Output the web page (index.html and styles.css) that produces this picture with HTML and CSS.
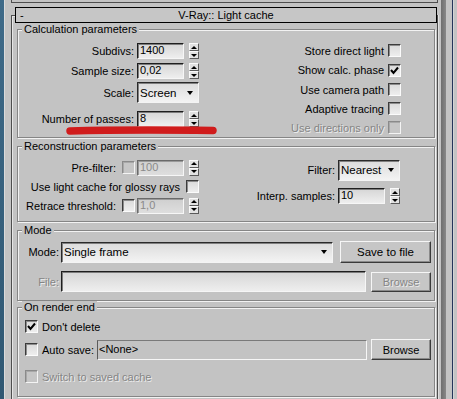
FILE: index.html
```html
<!DOCTYPE html>
<html>
<head>
<meta charset="utf-8">
<title>V-Ray:: Light cache</title>
<link rel="stylesheet" href="styles.css">
</head>
<body>
<div class="desk">
  <div class="edge-left"></div>
  <div class="column">
    <div class="prev"></div>
    <div class="rollout">
      <div class="rollout-title"><span class="toggle">-</span><span class="title-text">V-Ray:: Light cache</span><span></span></div>

      <div class="group calc">
        <div class="legend"><span>Calculation parameters</span></div>
        <div class="cols">
          <div class="lcol calc-l">
            <div class="row h16"><span class="lbl">Subdivs:</span><span class="field">1400</span><span class="spin"><span class="up"></span><span class="dn"></span></span></div>
            <div class="row h16 mt4"><span class="lbl">Sample size:</span><span class="field">0,02</span><span class="spin"><span class="up"></span><span class="dn"></span></span></div>
            <div class="row h21 mt3"><span class="lbl">Scale:</span><span class="combo w62"><span>Screen</span><i class="arrow"></i></span></div>
            <div class="row h16 mt8"><span class="lbl">Number of passes:</span><span class="field">8</span><span class="spin"><span class="up"></span><span class="dn"></span></span></div>
          </div>
          <div class="rcol calc-r">
            <div class="crow h19"><span>Store direct light</span><span class="cb"></span></div>
            <div class="crow h20"><span>Show calc. phase</span><span class="cb"><svg width="11" height="11" viewBox="0 0 11 11"><polyline points="2,5 4.5,8 9,2.5" fill="none" stroke="#000" stroke-width="2"/></svg></span></div>
            <div class="crow h19"><span>Use camera path</span><span class="cb"></span></div>
            <div class="crow h19"><span>Adaptive tracing</span><span class="cb"></span></div>
            <div class="crow h19 off"><span>Use directions only</span><span class="cb dis"></span></div>
          </div>
        </div>
        <svg class="marker" width="153" height="11" viewBox="0 0 153 11"><path d="M5 6 Q 60 4.5 148 5.5" fill="none" stroke="#d01c1c" stroke-width="7.5" stroke-linecap="round"/></svg>
      </div>

      <div class="group recon">
        <div class="legend"><span>Reconstruction parameters</span></div>
        <div class="cols">
          <div class="lcol recon-l">
            <div class="row h19"><span class="lbl2">Pre-filter:</span><span class="cb dis mr2"></span><span class="field dis">100</span><span class="spin"><span class="up"></span><span class="dn"></span></span></div>
            <div class="row h19"><span class="lbl2">Use light cache for glossy rays</span><span class="cb"></span></div>
            <div class="row h19"><span class="lbl2">Retrace threshold:</span><span class="cb mr2"></span><span class="field dis">1,0</span><span class="spin"><span class="up"></span><span class="dn"></span></span></div>
          </div>
          <div class="rcol recon-r">
            <div class="row h22"><span class="lbl">Filter:</span><span class="combo w62"><span>Nearest</span><i class="arrow"></i></span></div>
            <div class="row h18 mt6"><span class="lbl">Interp. samples:</span><span class="field">10</span><span class="spin"><span class="up"></span><span class="dn"></span></span></div>
          </div>
        </div>
      </div>

      <div class="group mode">
        <div class="legend"><span>Mode</span></div>
        <div class="gbody mode-body">
          <div class="mrow h22">
            <span class="mlbl">Mode:</span>
            <span class="combo w272"><span>Single frame</span><i class="arrow"></i></span>
            <span class="btn save">Save to file</span>
          </div>
          <div class="mrow h21 mt8">
            <span class="mlbl off">File:</span>
            <span class="field wide"></span>
            <span class="btn browse off">Browse</span>
          </div>
        </div>
      </div>

      <div class="group render">
        <div class="legend"><span>On render end</span></div>
        <div class="gbody render-body">
          <div class="erow h17"><span class="cb"><svg width="11" height="11" viewBox="0 0 11 11"><polyline points="2,5 4.5,8 9,2.5" fill="none" stroke="#000" stroke-width="2"/></svg></span><span>Don't delete</span></div>
          <div class="erow h21 mt4"><span class="cb"></span><span>Auto save:</span><span class="static">&lt;None&gt;</span><span class="btn browse">Browse</span></div>
          <div class="erow h17 mt8 off"><span class="cb dis"></span><span>Switch to saved cache</span></div>
        </div>
      </div>
    </div>
  </div>
  <div class="band"></div>
  <div class="navy"></div>
</div>
</body>
</html>
```

FILE: styles.css
```css
* { box-sizing: border-box; }
html, body { margin: 0; padding: 0; }
body {
  width: 457px;
  height: 399px;
  overflow: hidden;
  background: #c3c3c3;
  font-family: "Liberation Sans", Arial, sans-serif;
  font-size: 11px;
  color: #000;
}
.desk { display: flex; height: 399px; }
.edge-left {
  width: 5px;
  background: linear-gradient(#3e6a88, #2f5772);
  border-right: 1px solid #dadada;
}
.column {
  width: 427px;
  margin-left: 6px;
  display: flex;
  flex-direction: column;
}
.prev {
  height: 3px;
  border: 1px solid #4e4e4e;
  border-top: none;
}
.rollout {
  flex: 1;
  margin-top: 12px;
  border: 1px solid #4e4e4e;
  border-bottom: none;
  box-shadow: inset 1px 1px #e6e6e6, 1px 0 #e0e0e0;
}
.rollout-title {
  margin: -9px 0 0 3px;
  height: 16px;
  border: 1px solid #000;
  background: #c6c6c6;
  display: grid;
  grid-template-columns: 1fr auto 1fr;
  align-items: center;
  line-height: 13px;
}
.toggle { padding-left: 4px; }

.group {
  position: relative;
  border: 1px solid #858585;
  box-shadow: inset 1px 1px #f2f2f2, 1px 1px #f2f2f2;
  margin-left: 5px;
  margin-right: 2px;
}
.calc { margin-top: 6px; height: 109px; }
.recon { margin-top: 8px; height: 76px; }
.mode { margin-top: 8px; height: 71px; }
.render { margin-top: 6px; height: 90px; }
.mode-body { padding: 10px 3px 0 0; }
.render-body { padding: 10px 3px 0 7px; }

.legend { height: 0; display: flex; align-items: flex-start; }
.legend span {
  margin-top: -7px;
  margin-left: 4px;
  height: 13px;
  line-height: 13px;
  padding: 0 2px;
  background: #c3c3c3;
}

.cols { display: flex; justify-content: space-between; height: 100%; }
.lcol { width: 181px; display: flex; flex-direction: column; }
.rcol { display: flex; flex-direction: column; }
.calc-l { padding-top: 13px; }
.calc-r { padding-top: 11px; margin-right: 33px; }
.recon-l { padding-top: 11px; }
.recon-r { padding-top: 12px; margin-right: 34px; }

.row { display: flex; align-items: center; justify-content: flex-end; }
.crow { display: flex; align-items: center; justify-content: flex-end; gap: 4px; }
.mrow { display: flex; align-items: center; }
.erow { display: flex; align-items: center; }

.h16 { height: 16px; }
.h17 { height: 17px; }
.h18 { height: 18px; }
.h19 { height: 19px; }
.h20 { height: 20px; }
.h21 { height: 21px; }
.h22 { height: 22px; }
.mt3 { margin-top: 3px; }
.mt4 { margin-top: 4px; }
.mt6 { margin-top: 6px; }
.mt8 { margin-top: 8px; }
.mr2 { margin-right: 2px; }

.lbl { margin-right: 3px; white-space: nowrap; }
.lbl2 { margin-right: 6px; white-space: nowrap; }

.field {
  width: 47px;
  height: 16px;
  border: 1px solid;
  border-color: #1e1e1e #f6f6f6 #f6f6f6 #1e1e1e;
  box-shadow: inset 1px 1px #7c7c7c;
  background: linear-gradient(#d6d6d6, #eeeeee);
  padding-left: 2px;
  line-height: 13px;
  white-space: nowrap;
}
.field.dis {
  color: #8a8a8a;
  background: linear-gradient(#cfcfcf, #dedede);
  border-color: #6a6a6a #f6f6f6 #f6f6f6 #6a6a6a;
  box-shadow: inset 1px 1px #9a9a9a;
}
.spin {
  margin-left: 5px;
  width: 10px;
  height: 16px;
  display: flex;
  flex-direction: column;
}
.spin span {
  flex: 1;
  background: #e2e2e2;
  border: 1px solid;
  border-color: #fafafa #5a5a5a #5a5a5a #fafafa;
  display: flex;
  align-items: center;
  justify-content: center;
}
.spin .up::after, .spin .dn::after {
  content: "";
  width: 0;
  height: 0;
  border-left: 3px solid transparent;
  border-right: 3px solid transparent;
}
.spin .up::after { border-bottom: 3px solid #000; }
.spin .dn::after { border-top: 3px solid #000; }

.combo {
  height: 21px;
  display: flex;
  align-items: center;
  justify-content: space-between;
  border: 1px solid;
  border-color: #2a2a2a #f4f4f4 #f4f4f4 #2a2a2a;
  box-shadow: inset 1px 1px #808080;
  background: linear-gradient(#dcdcdc, #f3f3f3);
  padding: 0 5px 0 2px;
  font-size: 11.5px;
  white-space: nowrap;
}
.w62 { width: 62px; }
.w272 { width: 272px; }
.arrow {
  width: 0;
  height: 0;
  border-left: 3.5px solid transparent;
  border-right: 3.5px solid transparent;
  border-top: 4px solid #000;
}

.cb {
  width: 13px;
  height: 13px;
  flex: none;
  border: 1px solid;
  border-color: #3c3c3c #fbfbfb #fbfbfb #3c3c3c;
  box-shadow: inset 1px 1px #8c8c8c;
  background: linear-gradient(#dadada, #eeeeee);
  display: flex;
  align-items: center;
  justify-content: center;
}
.cb svg { display: block; }
.cb.dis {
  background: #c6c6c6;
  border-color: #8a8a8a #f4f4f4 #f4f4f4 #8a8a8a;
  box-shadow: inset 1px 1px #a8a8a8;
}

.off { color: #858585; text-shadow: 1px 1px 0 #ececec; }

.mlbl { width: 41px; text-align: right; margin-right: 2px; flex: none; }
.btn {
  flex: none;
  display: flex;
  align-items: center;
  justify-content: center;
  border: 1px solid;
  border-color: #f6f6f6 #3a3a3a #3a3a3a #f6f6f6;
  box-shadow: inset -1px -1px #8a8a8a;
  background: #c6c6c6;
  white-space: nowrap;
}
.save { width: 91px; height: 22px; margin-left: 7px; font-size: 11.5px; }
.browse { width: 60px; height: 21px; margin-left: 5px; }
.mode .browse { height: 20px; }
.render .browse { margin-left: 4px; }
.field.wide { width: 305px; height: 21px; }

.erow .cb { margin-right: 4px; }
.static {
  flex: 1;
  height: 20px;
  margin-left: 3px;
  border: 1px solid;
  border-color: #7a7a7a #f6f6f6 #f6f6f6 #5a5a5a;
  padding-left: 1px;
  line-height: 17px;
  background: #c3c3c3;
}

.marker {
  position: absolute;
  left: 47px;
  top: 95px;
}

.band {
  width: 5px;
  margin-left: 3px;
  background: linear-gradient(to right, #6e6e6e, #888888);
}
.navy {
  width: 1px;
  margin-left: 6px;
  background: #24345a;
  box-shadow: 1px 0 #d4d4d4;
}
```
